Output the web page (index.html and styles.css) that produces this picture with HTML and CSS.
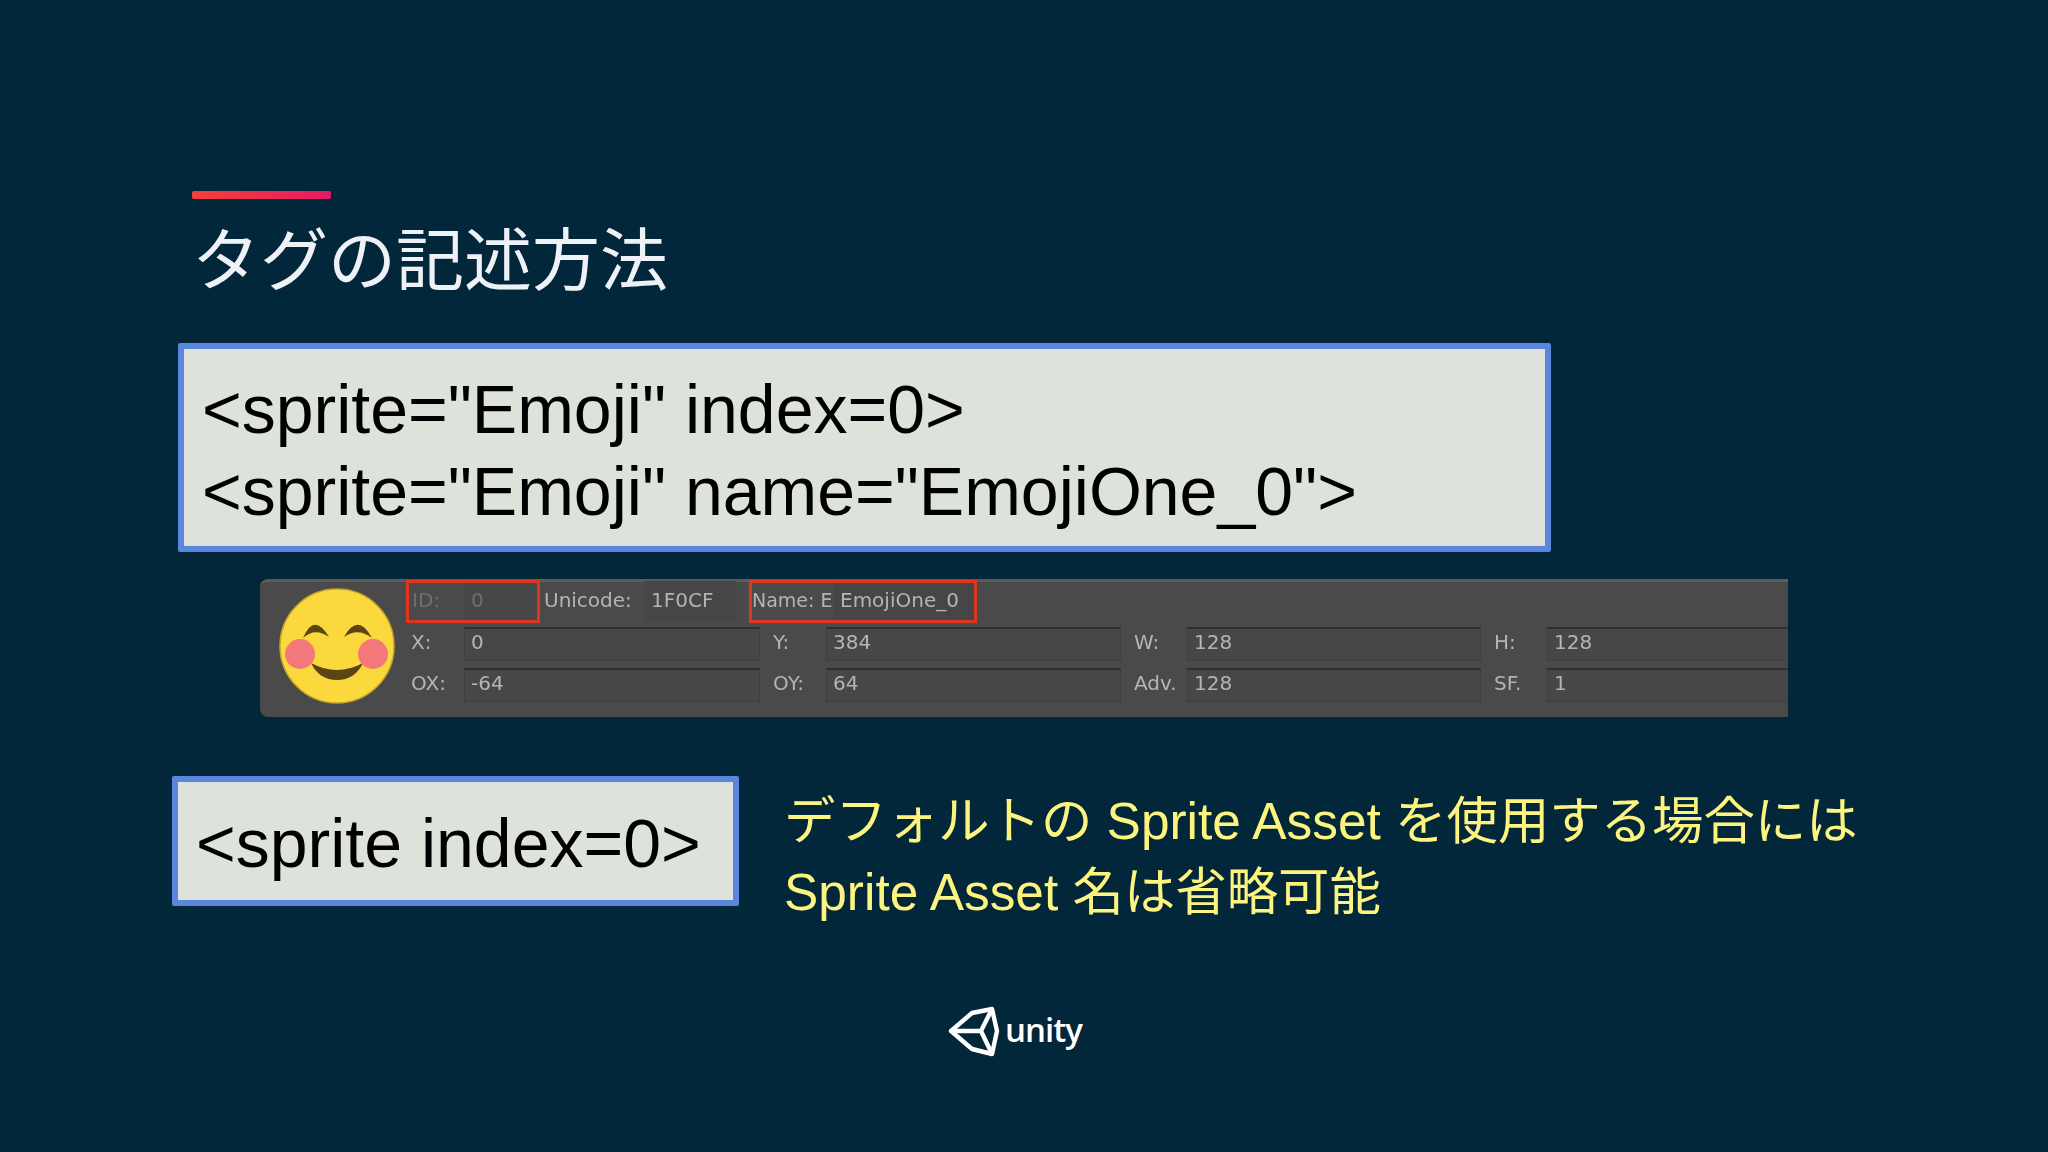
FILE: index.html
```html
<!DOCTYPE html>
<html lang="ja">
<head>
<meta charset="utf-8">
<title>タグの記述方法</title>
<link rel="stylesheet" href="styles.css">
</head>
<body>
<main class="slide">
  <div class="accent"></div>
  <h1 class="title">タグの記述方法</h1>
  <div class="code code-main">
    <div>&lt;sprite="Emoji" index=0&gt;</div>
    <div>&lt;sprite="Emoji" name="EmojiOne_0"&gt;</div>
  </div>
  <section class="panel">
    <svg class="emoji" viewBox="0 0 116 116" aria-hidden="true">
      <circle cx="58" cy="58" r="57" fill="#fbd93c" stroke="#c9a52a" stroke-width="1.5"/>
      <path d="M24 50Q35 24 50 49Q36 39 24 50Z" fill="#5c4515"/>
      <path d="M65 49Q79 24 93 50Q79 39 65 49Z" fill="#5c4515"/>
      <path d="M32 75Q58 89 84 75Q76 92 58 92Q40 92 32 75Z" fill="#5c4515"/>
      <circle cx="21" cy="66" r="15" fill="#f4777a"/>
      <circle cx="94" cy="66" r="15" fill="#f4777a"/>
    </svg>
    <div class="props">
      <div class="top-row">
        <div class="mark mark-id"><span class="label dim">ID:</span><span class="field-flat dim">0</span></div>
        <span class="label unicode-label">Unicode:</span>
        <span class="field-flat unicode-field">1F0CF</span>
        <div class="mark mark-name"><span class="label name-label">Name: E</span><span class="field-flat name-field">EmojiOne_0</span></div>
      </div>
      <div class="row">
        <div class="pair"><span class="label">X:</span><span class="field">0</span></div>
        <div class="pair"><span class="label">Y:</span><span class="field">384</span></div>
        <div class="pair"><span class="label">W:</span><span class="field">128</span></div>
        <div class="pair"><span class="label">H:</span><span class="field field-open">128</span></div>
      </div>
      <div class="row">
        <div class="pair"><span class="label">OX:</span><span class="field">-64</span></div>
        <div class="pair"><span class="label">OY:</span><span class="field">64</span></div>
        <div class="pair"><span class="label">Adv.</span><span class="field">128</span></div>
        <div class="pair"><span class="label">SF.</span><span class="field field-open">1</span></div>
      </div>
    </div>
  </section>
  <div class="lower">
    <div class="code code-short">&lt;sprite index=0&gt;</div>
    <p class="note">デフォルトの Sprite Asset を使用する場合には<br>Sprite Asset 名は省略可能</p>
  </div>
  <footer class="brand">
    <svg class="cube" viewBox="0 0 52 52" aria-hidden="true">
      <path d="M3 25L24 7L44 3L49 25L44 48L24 43Z" fill="none" stroke="#fff" stroke-width="4.4" stroke-linejoin="round"/>
      <path d="M3 25H33L44 3M33 25L44 48" fill="none" stroke="#fff" stroke-width="4.4" stroke-linejoin="round"/>
    </svg>
    <span class="brand-name">unity</span>
  </footer>
</main>
</body>
</html>
```
FILE: styles.css
```css
* { box-sizing: border-box; }
html, body { margin: 0; padding: 0; }
body { background: #02263a; }
.slide {
  width: 2048px;
  height: 1152px;
  overflow: hidden;
  padding-top: 191px;
  background: #02263a;
  font-family: "Liberation Sans", "Noto Sans CJK JP", sans-serif;
}
.accent {
  width: 139px;
  height: 8px;
  margin-left: 192px;
  border-radius: 2px;
  background: linear-gradient(90deg, #f2403a, #e71a62);
}
.title {
  margin: 12px 0 0 192px;
  height: 132px;
  font-family: "Noto Sans CJK JP", sans-serif;
  font-weight: 400;
  font-size: 68px;
  line-height: 90px;
  color: #eef1f6;
}
.code {
  border: 6px solid #5a86dc;
  border-radius: 2px;
  background: #dde3da;
  color: #000;
  font-size: 68px;
}
.code-main {
  width: 1373px;
  height: 209px;
  margin-left: 178px;
  padding: 19px 0 0 18px;
  line-height: 82px;
}
.panel {
  display: flex;
  width: 1528px;
  height: 138px;
  margin: 27px 0 0 260px;
  padding: 0 0 0 19px;
  border-radius: 8px 0 0 8px;
  border-top: 3px solid #5b5b58;
  background: #4a4a4a;
  font-family: "DejaVu Sans", sans-serif;
  font-size: 20px;
  color: #b4b4b4;
}
.emoji {
  flex: none;
  width: 116px;
  height: 116px;
  margin: 6px 16px 0 0;
}
.props { flex: 1; filter: blur(0.5px); }
.top-row {
  display: flex;
  align-items: center;
  height: 40px;
  margin: -1px 0 0 -5px;
}
.mark {
  display: flex;
  flex: none;
  align-items: center;
  height: 43px;
  border: 3px solid #e0361f;
}
.mark-id { width: 134px; padding-left: 3px; }
.dim { color: #6f6f72; }
.field-flat {
  display: flex;
  flex: none;
  align-items: center;
  align-self: stretch;
  padding: 0 0 3px 6px;
  background: #464646;
}
.mark-id .field-flat { flex: 1; }
.label {
  display: flex;
  align-items: center;
  flex: none;
  width: 53px;
  padding-bottom: 5px;
}
.top-row .unicode-label { width: 101px; margin-left: 4px; padding-bottom: 3px; }
.unicode-field { width: 92px; height: 40px; }
.mark-name { width: 228px; margin-left: 12px; }
.mark .name-label { width: 82px; white-space: nowrap; font-size: 19px; padding-bottom: 3px; }
.mark .name-field { flex: 1; }
.mark-id .label { padding-bottom: 3px; }
.row {
  display: grid;
  grid-template-columns: 349px 348px 347px 294px;
  column-gap: 13px;
  height: 34px;
  margin-top: 7px;
}
.top-row + .row { margin-top: 6px; }
.pair { display: flex; align-items: stretch; }
.field {
  flex: 1;
  display: flex;
  align-items: center;
  padding: 0 0 5px 6px;
  border: 1px solid #3f3f3f;
  border-top: 2px solid #2f2f2f;
  background: #474747;
}
.field-open { border-right: 0; }
.lower {
  display: flex;
  align-items: flex-start;
  margin: 59px 0 0 172px;
}
.code-short {
  flex: none;
  width: 567px;
  height: 130px;
  padding: 23px 0 0 18px;
  line-height: 76px;
}
.note {
  margin: 0 0 0 45px;
  padding-top: 10px;
  font-size: 51.4px;
  line-height: 71px;
  white-space: nowrap;
  color: #fdf47f;
}
.brand {
  display: flex;
  align-items: center;
  justify-content: center;
  gap: 5px;
  width: 2030px;
  margin-top: 78px;
}
.cube { width: 52px; height: 52px; }
.brand-name {
  margin-bottom: 5px;
  font-family: "Open Sans", sans-serif;
  font-weight: 600;
  font-size: 33px;
  letter-spacing: -1px;
  color: #fff;
}
```
